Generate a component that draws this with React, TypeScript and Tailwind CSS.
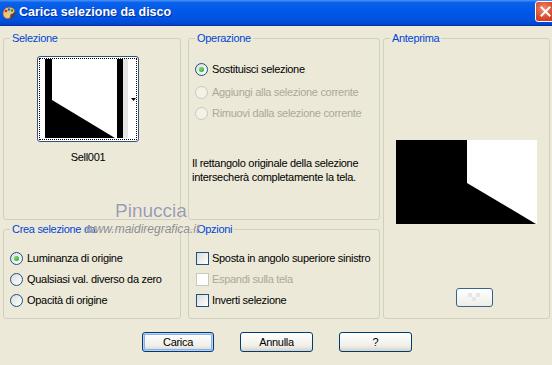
import React from "react";

type RadioProps = { label: string; checked?: boolean; disabled?: boolean };

function Radio({ label, checked, disabled }: RadioProps) {
  return (
    <div className="flex h-[13px] items-center gap-[4px]">
      <span
        className={
          disabled
            ? "flex h-[13px] w-[13px] shrink-0 items-center justify-center rounded-full border border-[#CAC8BB] bg-[#F3F1E8]"
            : "flex h-[13px] w-[13px] shrink-0 items-center justify-center rounded-full border border-[#1C5180] bg-[linear-gradient(135deg,#DCDCD7,#FFFFFF)]"
        }
      >
        {checked ? (
          <span className="h-[5px] w-[5px] rounded-full bg-[radial-gradient(circle_at_35%_35%,#70E070,#21A121)]" />
        ) : null}
      </span>
      <span className={disabled ? "whitespace-nowrap leading-[13px] text-[#ACA899]" : "whitespace-nowrap leading-[13px]"}>
        {label}
      </span>
    </div>
  );
}

type CheckProps = { label: string; disabled?: boolean };

function Check({ label, disabled }: CheckProps) {
  return (
    <div className="flex h-[13px] items-center gap-[3px]">
      <span
        className={
          disabled
            ? "h-[13px] w-[13px] shrink-0 border border-[#CAC8BB] bg-white"
            : "h-[13px] w-[13px] shrink-0 border border-[#1C5180] bg-[linear-gradient(135deg,#DCDCD7,#FFFFFF)]"
        }
      />
      <span className={disabled ? "whitespace-nowrap leading-[13px] text-[#ACA899]" : "whitespace-nowrap leading-[13px]"}>
        {label}
      </span>
    </div>
  );
}

function Legend({ children }: { children: React.ReactNode }) {
  return <legend className="ml-[6px] px-[2px] leading-[13px] text-[#0046D5]">{children}</legend>;
}

function TitleBar() {
  return (
    <div className="flex h-[26px] items-center overflow-hidden border-b border-[#0831A6] bg-[linear-gradient(to_bottom,#4A95FA_0%,#0A61EA_10%,#0058E8_45%,#0052E2_80%,#0043C6_100%)]">
      <svg width="14" height="14" viewBox="0 0 14 14" className="ml-[2px] mt-[1px]">
        <path d="M2 4 C3 1 9 0 12 3 C14 6 12 8 10 8 C8 8 9 10 8 12 C6 14 1 12 1 8 C1 6 1.5 5 2 4 Z" fill="#E8C48A" stroke="#8A5A2A" strokeWidth="0.8" />
        <circle cx="4" cy="5" r="1.3" fill="#E02020" />
        <circle cx="7" cy="3.5" r="1.2" fill="#2060E0" />
        <circle cx="10" cy="4.5" r="1.2" fill="#20A020" />
        <circle cx="4" cy="9" r="1.3" fill="#F0D020" />
        <path d="M9 13 L13 6" stroke="#6A3A1A" strokeWidth="1.6" />
      </svg>
      <span className="ml-[3px] whitespace-nowrap font-['Liberation_Sans',Arial,sans-serif] text-[12.5px] font-bold tracking-normal text-white [text-shadow:1px_1px_0_#0A2A9A]">
        Carica selezione da disco
      </span>
      <div className="ml-auto mr-[-4px] mt-[1px] flex h-[21px] w-[21px] items-center justify-center self-start rounded-[3px] border border-white bg-[radial-gradient(circle_at_40%_35%,#F08A6A,#D8452A_60%,#C0391E)]">
        <svg width="11" height="11" viewBox="0 0 11 11">
          <path d="M1.5 1.5 L9.5 9.5 M9.5 1.5 L1.5 9.5" stroke="white" strokeWidth="2" strokeLinecap="square" />
        </svg>
      </div>
    </div>
  );
}

function XpButton({ label, isDefault }: { label: string; isDefault?: boolean }) {
  return (
    <button
      type="button"
      className={
        isDefault
          ? "flex h-[20px] w-[72px] items-center justify-center rounded-[3px] border border-[#003C74] bg-[linear-gradient(to_bottom,#FFFFFF,#F0F0EA_70%,#D8D2C6)] shadow-[inset_0_0_0_1px_#B8D0F6,inset_0_0_0_2px_#8CB0EC]"
          : "flex h-[20px] w-[73px] items-center justify-center rounded-[3px] border border-[#003C74] bg-[linear-gradient(to_bottom,#FFFFFF,#F0F0EA_70%,#D8D2C6)]"
      }
    >
      {label}
    </button>
  );
}

export default function App() {
  return (
    <div className="relative h-[365px] w-[552px] overflow-hidden bg-[#ECE9D8] font-['Liberation_Sans',Arial,sans-serif] text-[11px] tracking-[-0.3px] text-black">
      <TitleBar />

      <div className="flex pl-[3px] pt-[6px]">
        {/* left column */}
        <div className="flex w-[178px] flex-col gap-[3px]">
          <fieldset className="h-[188px] rounded-[3px] border border-[#D0D0BF]">
            <Legend>Selezione</Legend>
            <div className="ml-[33px] mt-[11px] flex w-[102px] flex-col items-center">
              <div className="h-[86px] w-[102px] rounded-[3px] border border-[#34537C] bg-white p-[1px]">
                <div className="flex h-full items-start border border-dotted border-black">
                  <svg width="83" height="79" viewBox="0 0 83 79" className="ml-[5px]">
                    <rect x="0" y="0" width="83" height="79" fill="#FFFFFF" />
                    <rect x="0" y="0" width="7" height="79" fill="#000" />
                    <rect x="72" y="0" width="6" height="79" fill="#000" />
                    <rect x="78" y="0" width="5" height="79" fill="#E4E4E4" />
                    <polygon points="7,41 70,79 7,79" fill="#000" />
                  </svg>
                  <svg width="5" height="3" viewBox="0 0 5 3" className="ml-[3px] self-center">
                    <polygon points="0,0 5,0 2.5,3" fill="#000" />
                  </svg>
                </div>
              </div>
              <div className="mt-[9px] leading-[13px]">Sell001</div>
            </div>
          </fieldset>

          <fieldset className="h-[96px] rounded-[3px] border border-[#D0D0BF]">
            <Legend>Crea selezione da</Legend>
            <div className="ml-[6px] mt-[16px] flex flex-col gap-[8px]">
              <Radio label="Luminanza di origine" checked />
              <Radio label="Qualsiasi val. diverso da zero" />
              <Radio label="Opacità di origine" />
            </div>
          </fieldset>
        </div>

        {/* middle column */}
        <div className="ml-[7px] flex w-[192px] flex-col gap-[3px]">
          <fieldset className="h-[188px] rounded-[3px] border border-[#D0D0BF]">
            <Legend>Operazione</Legend>
            <div className="ml-[6px] mt-[18px] flex flex-col">
              <Radio label="Sostituisci selezione" checked />
              <div className="mt-[10px]">
                <Radio label="Aggiungi alla selezione corrente" disabled />
              </div>
              <div className="mt-[8px]">
                <Radio label="Rimuovi dalla selezione corrente" disabled />
              </div>
            </div>
            <p className="ml-[3px] mt-[37px] leading-[13.5px]">
              Il rettangolo originale della selezione
              <br />
              intersecherà completamente la tela.
            </p>
          </fieldset>

          <fieldset className="h-[96px] rounded-[3px] border border-[#D0D0BF]">
            <Legend>Opzioni</Legend>
            <div className="ml-[7px] mt-[16px] flex flex-col gap-[8px]">
              <Check label="Sposta in angolo superiore sinistro" />
              <Check label="Espandi sulla tela" disabled />
              <Check label="Inverti selezione" />
            </div>
          </fieldset>
        </div>

        {/* right column */}
        <fieldset className="ml-[3px] h-[287px] w-[167px] rounded-[3px] border border-[#D0D0BF]">
          <Legend>Anteprima</Legend>
          <svg width="141" height="84" viewBox="0 0 141 84" className="ml-[12px] mt-[95px] block">
            <rect x="0" y="0" width="141" height="84" fill="#000" />
            <polygon points="71,0 141,0 141,84 140,84 71,43" fill="#FFF" />
          </svg>
          <div className="ml-[72px] mt-[64px] h-[19px] w-[37px] rounded-[3px] border border-[#3A6490] bg-[linear-gradient(to_bottom,#FFFFFF,#EDEDE8)] p-[3px]">
            <svg width="29" height="11" viewBox="0 0 29 11" className="mx-auto block">
              <rect x="8" y="1" width="4" height="4" fill="#E6E6E6" />
              <rect x="16" y="1" width="4" height="4" fill="#E6E6E6" />
              <rect x="12" y="5" width="4" height="4" fill="#E6E6E6" />
            </svg>
          </div>
        </fieldset>
      </div>

      <div className="ml-[142px] mt-[13px] flex gap-[26px]">
        <XpButton label="Carica" isDefault />
        <XpButton label="Annulla" />
        <XpButton label="?" />
      </div>

      {/* watermark */}
      <div className="pointer-events-none absolute left-[115px] top-[197px] font-['Liberation_Sans',Arial,sans-serif] text-[19px] tracking-normal text-[#9A9AB0] [text-shadow:0_0_1px_#FFFFFF]">
        Pinuccia
      </div>
      <div className="pointer-events-none absolute left-[86px] top-[220px] font-['Liberation_Sans',Arial,sans-serif] text-[12px] italic tracking-normal text-[#8A8A8A] [text-shadow:0_0_1px_#FFFFFF]">
        www.maidiregrafica.it
      </div>
    </div>
  );
}
